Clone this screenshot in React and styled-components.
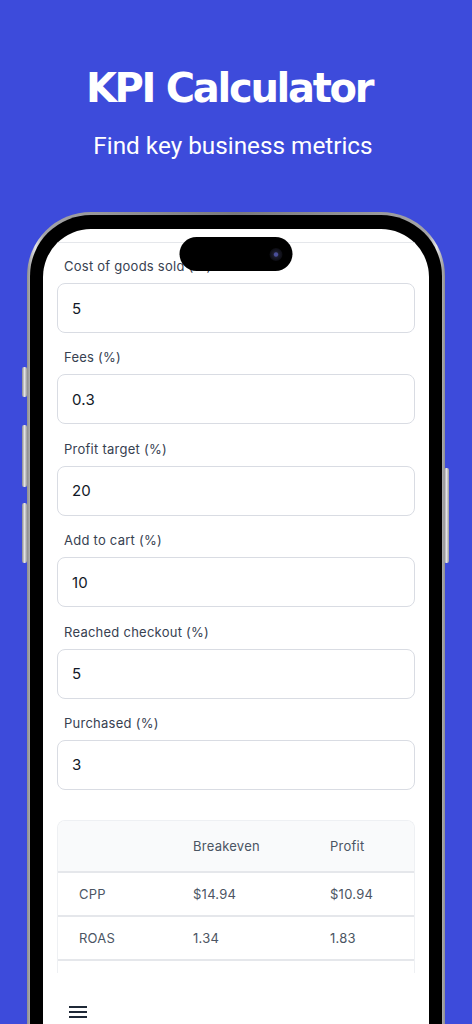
import styled, { createGlobalStyle } from "styled-components";

const GlobalStyle = createGlobalStyle`
  html, body {
    margin: 0;
    padding: 0;
    background: #3d4bdb;
  }
  * { box-sizing: border-box; }
`;

const fields = [
  { label: "Cost of goods sold (%)", value: "5" },
  { label: "Fees (%)", value: "0.3" },
  { label: "Profit target (%)", value: "20" },
  { label: "Add to cart (%)", value: "10" },
  { label: "Reached checkout (%)", value: "5" },
  { label: "Purchased (%)", value: "3" },
];

const rows = [
  { name: "CPP", breakeven: "$14.94", profit: "$10.94" },
  { name: "ROAS", breakeven: "1.34", profit: "1.83" },
  // next row sits below the fold, only its top border shows
  { name: "", breakeven: "", profit: "" },
];

export default function App() {
  return (
    <Page>
      <GlobalStyle />
      <Header>
        <Title>KPI Calculator</Title>
        <Subtitle>Find key business metrics</Subtitle>
      </Header>

      <Phone>
        <SideButton $side="left" $top={155} $height={30} />
        <SideButton $side="left" $top={213} $height={62} />
        <SideButton $side="left" $top={291} $height={60} />
        <SideButton $side="right" $top={256} $height={95} />
        <Bezel>
          <Screen>
            <Island>
              <Camera />
            </Island>
            <TopBar />
            <Scroll>
              <Form>
                {fields.map((f) => (
                  <Field key={f.label}>
                    <Label>{f.label}</Label>
                    <Input defaultValue={f.value} readOnly />
                  </Field>
                ))}
              </Form>

              <Table>
                <HeadRow>
                  <Cell />
                  <Cell>Breakeven</Cell>
                  <Cell>Profit</Cell>
                </HeadRow>
                {rows.map((r, i) => (
                  <Row key={i}>
                    <Cell>{r.name}</Cell>
                    <Cell>{r.breakeven}</Cell>
                    <Cell>{r.profit}</Cell>
                  </Row>
                ))}
              </Table>
            </Scroll>
            <BottomBar>
              <Menu width="18" height="12" viewBox="0 0 18 12">
                <path d="M0 1h18M0 6h18M0 11h18" stroke="#1f2937" strokeWidth="2" />
              </Menu>
            </BottomBar>
          </Screen>
        </Bezel>
      </Phone>
    </Page>
  );
}

const Page = styled.div`
  height: 1024px;
  overflow: hidden;
  display: flex;
  flex-direction: column;
  align-items: center;
  background: #3d4bdb;
`;

const Header = styled.header`
  display: flex;
  flex-direction: column;
  align-items: center;
  padding-top: 64px;
  color: #ffffff;
`;

const Title = styled.h1`
  margin: 0 14px 0 0;
  font-family: "DejaVu Sans", sans-serif;
  font-weight: 700;
  font-size: 40px;
  line-height: 48px;
  letter-spacing: -2.3px;
`;

const Subtitle = styled.p`
  margin: 20px 6px 0 0;
  font-family: Roboto, sans-serif;
  font-size: 24.3px;
  line-height: 28px;
`;

const Phone = styled.div`
  position: relative;
  margin-top: 52px;
  width: 418px;
  height: 880px;
  flex-shrink: 0;
  padding: 3px;
  border-radius: 64px 64px 0 0;
  background: linear-gradient(90deg, #8d8d8f, #e4e4e6 2%, #a4a4a6 4%, #7a7a7c 50%, #a4a4a6 96%, #e4e4e6 98%, #8d8d8f);
`;

const SideButton = styled.div`
  position: absolute;
  top: ${(p) => p.$top}px;
  ${(p) => (p.$side === "left" ? "left: -5px;" : "right: -4px;")}
  width: 5px;
  height: ${(p) => p.$height}px;
  border-radius: 2px;
  background: linear-gradient(90deg, #8a8a8c, #e2e2e4, #9a9a9c);
`;

const Bezel = styled.div`
  height: 100%;
  padding: 14px 13px 0;
  border-radius: 61px 61px 0 0;
  background: #000;
`;

const Screen = styled.div`
  position: relative;
  height: 100%;
  display: flex;
  flex-direction: column;
  border-radius: 48px 48px 0 0;
  overflow: hidden;
  background: #ffffff;
  font-family: Inter, "Noto Sans", sans-serif;
`;

const Island = styled.div`
  position: absolute;
  top: 8px;
  left: 50%;
  transform: translateX(-50%);
  width: 113px;
  height: 34px;
  border-radius: 17px;
  background: #000;
  display: flex;
  align-items: center;
  justify-content: flex-end;
  padding-right: 10px;
  z-index: 2;
`;

const Camera = styled.div`
  width: 13px;
  height: 13px;
  border-radius: 50%;
  background: radial-gradient(circle, #4a4f9a 0 18%, #1b1c2c 30%, #0c0c12 70%);
`;

const TopBar = styled.div`
  height: 14px;
  flex-shrink: 0;
  border-bottom: 1px solid #e5e7eb;
`;

const Scroll = styled.div`
  height: 730px;
  flex-shrink: 0;
  overflow: hidden;
  padding: 13px 14px 0;
`;

const Form = styled.div`
  display: flex;
  flex-direction: column;
  gap: 14.4px;
`;

const Field = styled.div`
  display: flex;
  flex-direction: column;
`;

const Label = styled.label`
  font-size: 13px;
  line-height: 20px;
  color: #374151;
  letter-spacing: 0.25px;
  margin-left: 7px;
  margin-bottom: 7px;
`;

const Input = styled.input`
  height: 50px;
  width: 100%;
  padding: 0 14px;
  border: 1px solid #d9dce3;
  border-radius: 8px;
  font-family: Inter, "Noto Sans", sans-serif;
  font-size: 15px;
  letter-spacing: 0.2px;
  color: #111827;
  background: #fff;
  outline: none;
`;

const Table = styled.div`
  margin-top: 30px;
  border: 1px solid #eef0f3;
  border-bottom: none;
  border-radius: 8px 8px 0 0;
  overflow: hidden;
`;

const Row = styled.div`
  display: grid;
  grid-template-columns: 114px 137px 1fr;
  align-items: center;
  height: 44px;
  padding-left: 21px;
  border-bottom: 2px solid #e5e7eb;
  font-size: 13px;
  color: #4b5563;
  letter-spacing: 0.25px;
`;

const HeadRow = styled(Row)`
  height: 52px;
  background: #f9fafb;
`;

const Cell = styled.div``;

const BottomBar = styled.div`
  flex: 1;
  padding: 33px 0 0 26px;
  background: #ffffff;
`;

const Menu = styled.svg`
  display: block;
`;
